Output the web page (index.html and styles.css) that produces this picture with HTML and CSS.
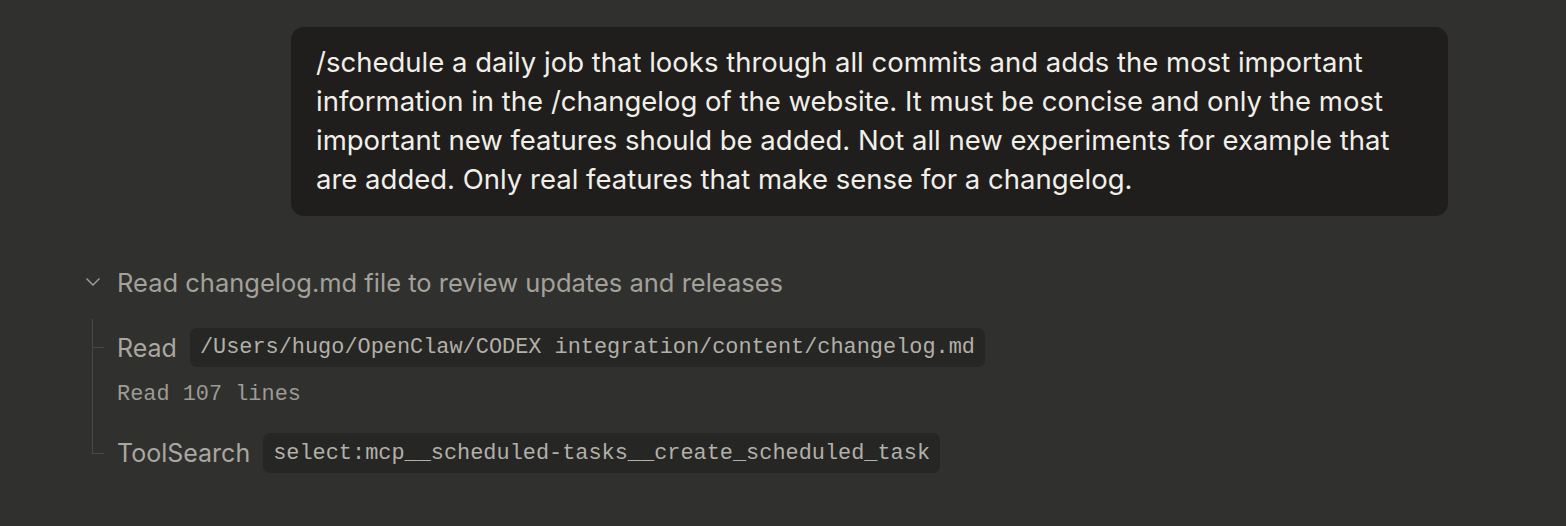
FILE: index.html
```html
<!DOCTYPE html>
<html>
<head>
<meta charset="utf-8">
<link rel="stylesheet" href="styles.css">
</head>
<body>
<div class="page">
  <div class="user-row">
    <div class="bubble">/schedule a daily job that looks through all commits and adds the most important<br>information in the /changelog of the website. It must be concise and only the most<br>important new features should be added. Not all new experiments for example that<br>are added. Only real features that make sense for a changelog.</div>
  </div>
  <div class="tool-group">
    <div class="group-title">
      <svg class="chevron" width="16" height="10" viewBox="0 0 16 10"><path d="M1.5 1.5 L8 8 L14.5 1.5" fill="none" stroke="#a3a19a" stroke-width="1.4"/></svg>
      <span>Read changelog.md file to review updates and releases</span>
    </div>
    <div class="tree">
      <div class="item">
        <div class="tool-row">
          <span class="tool-name">Read</span>
          <code class="chip">/Users/hugo/OpenClaw/CODEX integration/content/changelog.md</code>
        </div>
        <div class="result">Read 107 lines</div>
      </div>
      <div class="item last">
        <div class="tool-row">
          <span class="tool-name">ToolSearch</span>
          <code class="chip">select:mcp__scheduled-tasks__create_scheduled_task</code>
        </div>
      </div>
    </div>
  </div>
</div>
</body>
</html>
```

FILE: styles.css
```css
html, body {
  margin: 0;
  padding: 0;
  background: #30302e;
}
.page {
  width: 1566px;
  height: 526px;
  font-family: "Inter", "Noto Sans", sans-serif;
  color: #a6a49c;
}
.user-row {
  display: flex;
  justify-content: flex-end;
  padding: 27px 118px 0 0;
}
.bubble {
  width: 1157px;
  box-sizing: border-box;
  background: #1f1e1d;
  border-radius: 13px;
  padding: 16px 24px 17px 25px;
  color: #f1efe8;
  font-size: 27.5px;
  line-height: 39px;
  white-space: nowrap;
}
.tool-group {
  margin-top: 49px;
  padding-left: 85px;
}
.group-title {
  display: flex;
  align-items: center;
  height: 34px;
  font-size: 25.5px;
  color: #a3a19a;
}
.chevron {
  margin-right: 16px;
}
.tree {
  position: relative;
  margin: 20px 0 0 7px;
  padding: 9px 0 0 25px;
}
.tree::before {
  content: "";
  position: absolute;
  left: 0;
  top: 0;
  bottom: 20px;
  width: 1px;
  background: #4a4946;
}
.item {
  position: relative;
}
.item::before {
  content: "";
  position: absolute;
  left: -25px;
  top: 19px;
  width: 12px;
  height: 1px;
  background: #4a4946;
}
.item.last::before {
  top: 20px;
}
.tool-row {
  display: flex;
  align-items: center;
  gap: 13px;
  height: 39px;
}
.item.last .tool-row {
  height: 40px;
}
.tool-name {
  font-size: 25px;
  color: #a9a79f;
}
.chip {
  background: #262624;
  border-radius: 7px;
  height: 39px;
  display: flex;
  align-items: center;
  padding: 0 10px;
  font-family: "Liberation Mono", "DejaVu Sans Mono", monospace;
  font-size: 21.9px;
  color: #b2b0a8;
}
.item.last .chip {
  height: 40px;
}
.result {
  font-family: "Liberation Mono", "DejaVu Sans Mono", monospace;
  font-size: 21.9px;
  line-height: 28px;
  color: #9d9b93;
  margin: 14px 0 24px;
}
```
